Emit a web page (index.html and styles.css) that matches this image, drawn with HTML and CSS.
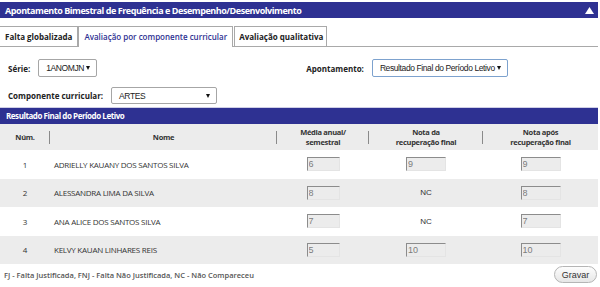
FILE: index.html
```html
<!DOCTYPE html>
<html lang="pt-BR">
<head>
  <meta charset="UTF-8" />
  <title>Apontamento Bimestral</title>
  <link rel="stylesheet" href="styles.css">
</head>
<body>

  <div class="panel">
    <div class="panel-title">
      <span>Apontamento Bimestral de Frequência e Desempenho/Desenvolvimento</span>
      <svg class="collapse" width="9" height="7" viewBox="0 0 9 7"><path d="M0 7 L4.5 0 L9 7 Z" fill="#fff"/></svg>
    </div>

    <ul class="tabs">
      <li class="tab">Falta globalizada</li>
      <li class="tab active">Avaliação por componente curricular</li>
      <li class="tab">Avaliação qualitativa</li>
    </ul>

    <div class="filters">
      <div class="filter-row">
        <div class="field">
          <label>Série:</label>
          <div class="select select-serie"><span>1ANOMJN</span><i class="caret"></i></div>
        </div>
        <div class="field field-apont">
          <label>Apontamento:</label>
          <div class="select select-apont focused"><span>Resultado Final do Período Letivo</span><i class="caret"></i></div>
        </div>
      </div>
      <div class="filter-row">
        <div class="field">
          <label>Componente curricular:</label>
          <div class="select select-comp"><span>ARTES</span><i class="caret"></i></div>
        </div>
      </div>
    </div>

    <div class="section-title">Resultado Final do Período Letivo</div>

    <table class="grid">
      <colgroup>
        <col style="width: 50px">
        <col style="width: 227px">
        <col style="width: 92px">
        <col style="width: 114px">
        <col>
      </colgroup>
      <thead>
        <tr>
          <th class="sep">Núm.</th>
          <th class="sep">Nome</th>
          <th class="sep">Média anual/<br>semestral</th>
          <th class="sep">Nota da<br>recuperação final</th>
          <th>Nota após<br>recuperação final</th>
        </tr>
      </thead>
      <tbody>
        <tr>
          <td class="num">1</td>
          <td class="name">ADRIELLY KAUANY DOS SANTOS SILVA</td>
          <td><input class="nota short" value="6" readonly></td>
          <td><input class="nota" value="9" readonly></td>
          <td><input class="nota" value="9" readonly></td>
        </tr>
        <tr>
          <td class="num">2</td>
          <td class="name">ALESSANDRA LIMA DA SILVA</td>
          <td><input class="nota short" value="8" readonly></td>
          <td class="nc">NC</td>
          <td><input class="nota" value="8" readonly></td>
        </tr>
        <tr>
          <td class="num">3</td>
          <td class="name">ANA ALICE DOS SANTOS SILVA</td>
          <td><input class="nota short" value="7" readonly></td>
          <td class="nc">NC</td>
          <td><input class="nota" value="7" readonly></td>
        </tr>
        <tr>
          <td class="num">4</td>
          <td class="name">KELVY KAUAN LINHARES REIS</td>
          <td><input class="nota short" value="5" readonly></td>
          <td><input class="nota" value="10" readonly></td>
          <td><input class="nota" value="10" readonly></td>
        </tr>
      </tbody>
    </table>

    <div class="footer">
      <span class="legend">FJ - Falta Justificada, FNJ - Falta Não Justificada, NC - Não Compareceu</span>
      <button class="btn">Gravar</button>
    </div>
  </div>

</body>
</html>
```

FILE: styles.css
```css
body {
  margin: 0;
  padding: 0;
  background: #fff;
  font-family: "Open Sans", Arial, sans-serif;
  color: #222;
}

.panel {
  width: 598px;
  padding-top: 2px;
}

.panel-title {
  height: 16px;
  background: #2e3192;
  color: #fff;
  font-size: 9px;
  font-weight: 700;
  letter-spacing: -0.45px;
  display: flex;
  align-items: center;
  justify-content: space-between;
  padding: 0 4px 0 5px;
}

/* Tabs */
.tabs {
  list-style: none;
  margin: 8px 0 0;
  padding: 0;
  display: flex;
  border-bottom: 1px solid #a9a9a9;
  height: 20px;
}

.tab {
  font-size: 8px;
  font-weight: 700;
  padding: 0 5px;
  line-height: 19px;
  border-top: 1px solid #a9a9a9;
  border-right: 1px solid #a9a9a9;
  background: #fff;
  white-space: nowrap;
}

.tab.active {
  color: #2e3192;
  font-weight: 600;
  height: 20px;
  border-left: 1px solid #a9a9a9;
  margin-bottom: -1px;
  padding: 0 5px;
}

.tab.active + .tab {
  margin-left: 1px;
  border-left: 1px solid #a9a9a9;
  padding: 0 3px 0 4px;
}

/* Filters */
.filters {
  padding: 12px 8px 0;
}

.filter-row {
  display: flex;
  align-items: center;
  height: 18px;
  margin-bottom: 10px;
}

.filter-row:last-child {
  height: 17px;
  margin-bottom: 0;
}

.field {
  display: flex;
  align-items: center;
  flex-shrink: 0;
}

.field label {
  font-size: 8px;
  font-weight: 700;
  margin-right: 8px;
  white-space: nowrap;
}

.field-apont {
  margin-left: 209px;
}

.select {
  box-sizing: border-box;
  display: flex;
  align-items: center;
  justify-content: space-between;
  height: 18px;
  border: 1px solid #a6a6a6;
  border-radius: 2px;
  font-family: "Liberation Sans", Arial, sans-serif;
  font-size: 8.5px;
  letter-spacing: -0.4px;
  color: #222;
  padding: 0 6px 0 7px;
  background: #fff;
  white-space: nowrap;
  flex-shrink: 0;
}

.select.focused {
  border-color: #7da2ce;
}

.select-serie { width: 59px; }
.select-apont { width: 136px; }
.select-comp { width: 106px; height: 17px; }

.caret {
  width: 0;
  height: 0;
  border-left: 2.5px solid transparent;
  border-right: 2.5px solid transparent;
  border-top: 4px solid #111;
}

/* Section */
.section-title {
  margin-top: 3px;
  border-top: 1px solid #cfcfe6;
  height: 16px;
  line-height: 16px;
  background: #2e3192;
  color: #fff;
  font-size: 8px;
  font-weight: 700;
  letter-spacing: -0.45px;
  padding: 0 6px;
}

.grid {
  width: 598px;
  border-collapse: collapse;
  table-layout: fixed;
}

.grid th {
  background: #ececec;
  height: 26px;
  padding: 0;
  font-size: 7.5px;
  font-weight: 700;
  letter-spacing: -0.3px;
  color: #333;
  line-height: 10px;
  text-align: center;
}

.grid th.sep {
  background: linear-gradient(#8a8a8a, #8a8a8a) right center / 1px 13px no-repeat, #ececec;
}

.grid td {
  height: 28.5px;
  padding: 0;
  font-size: 8px;
  color: #333;
  text-align: center;
}

.grid tbody tr:nth-child(even) td {
  background: #ececec;
}

.grid td.name {
  text-align: left;
  padding-left: 4px;
  letter-spacing: -0.25px;
}

.grid td.nc {
  font-family: "Liberation Sans", Arial, sans-serif;
  font-size: 8px;
}

.nota {
  width: 37px;
  height: 12px;
  box-sizing: content-box;
  padding: 0 0 0 1px;
  margin: 0;
  border: 1px solid;
  border-color: #8c8c8c #e4e4e4 #e4e4e4 #8c8c8c;
  background: #ececec;
  font-family: "Liberation Sans", Arial, sans-serif;
  font-size: 9px;
  color: #7c7c7c;
  vertical-align: middle;
}

.nota.short {
  width: 30px;
}

.footer {
  display: flex;
  justify-content: space-between;
  align-items: center;
  padding: 2px 1px 0 4px;
}

.legend {
  font-size: 7.5px;
  font-weight: 600;
  color: #555;
}

.btn {
  font-family: "Liberation Sans", Arial, sans-serif;
  font-size: 9px;
  color: #333;
  height: 17px;
  width: 43px;
  padding: 0;
  border: 1px solid #b5b5b5;
  border-radius: 9px;
  background: linear-gradient(#fdfdfd, #e6e6e6);
}
```
